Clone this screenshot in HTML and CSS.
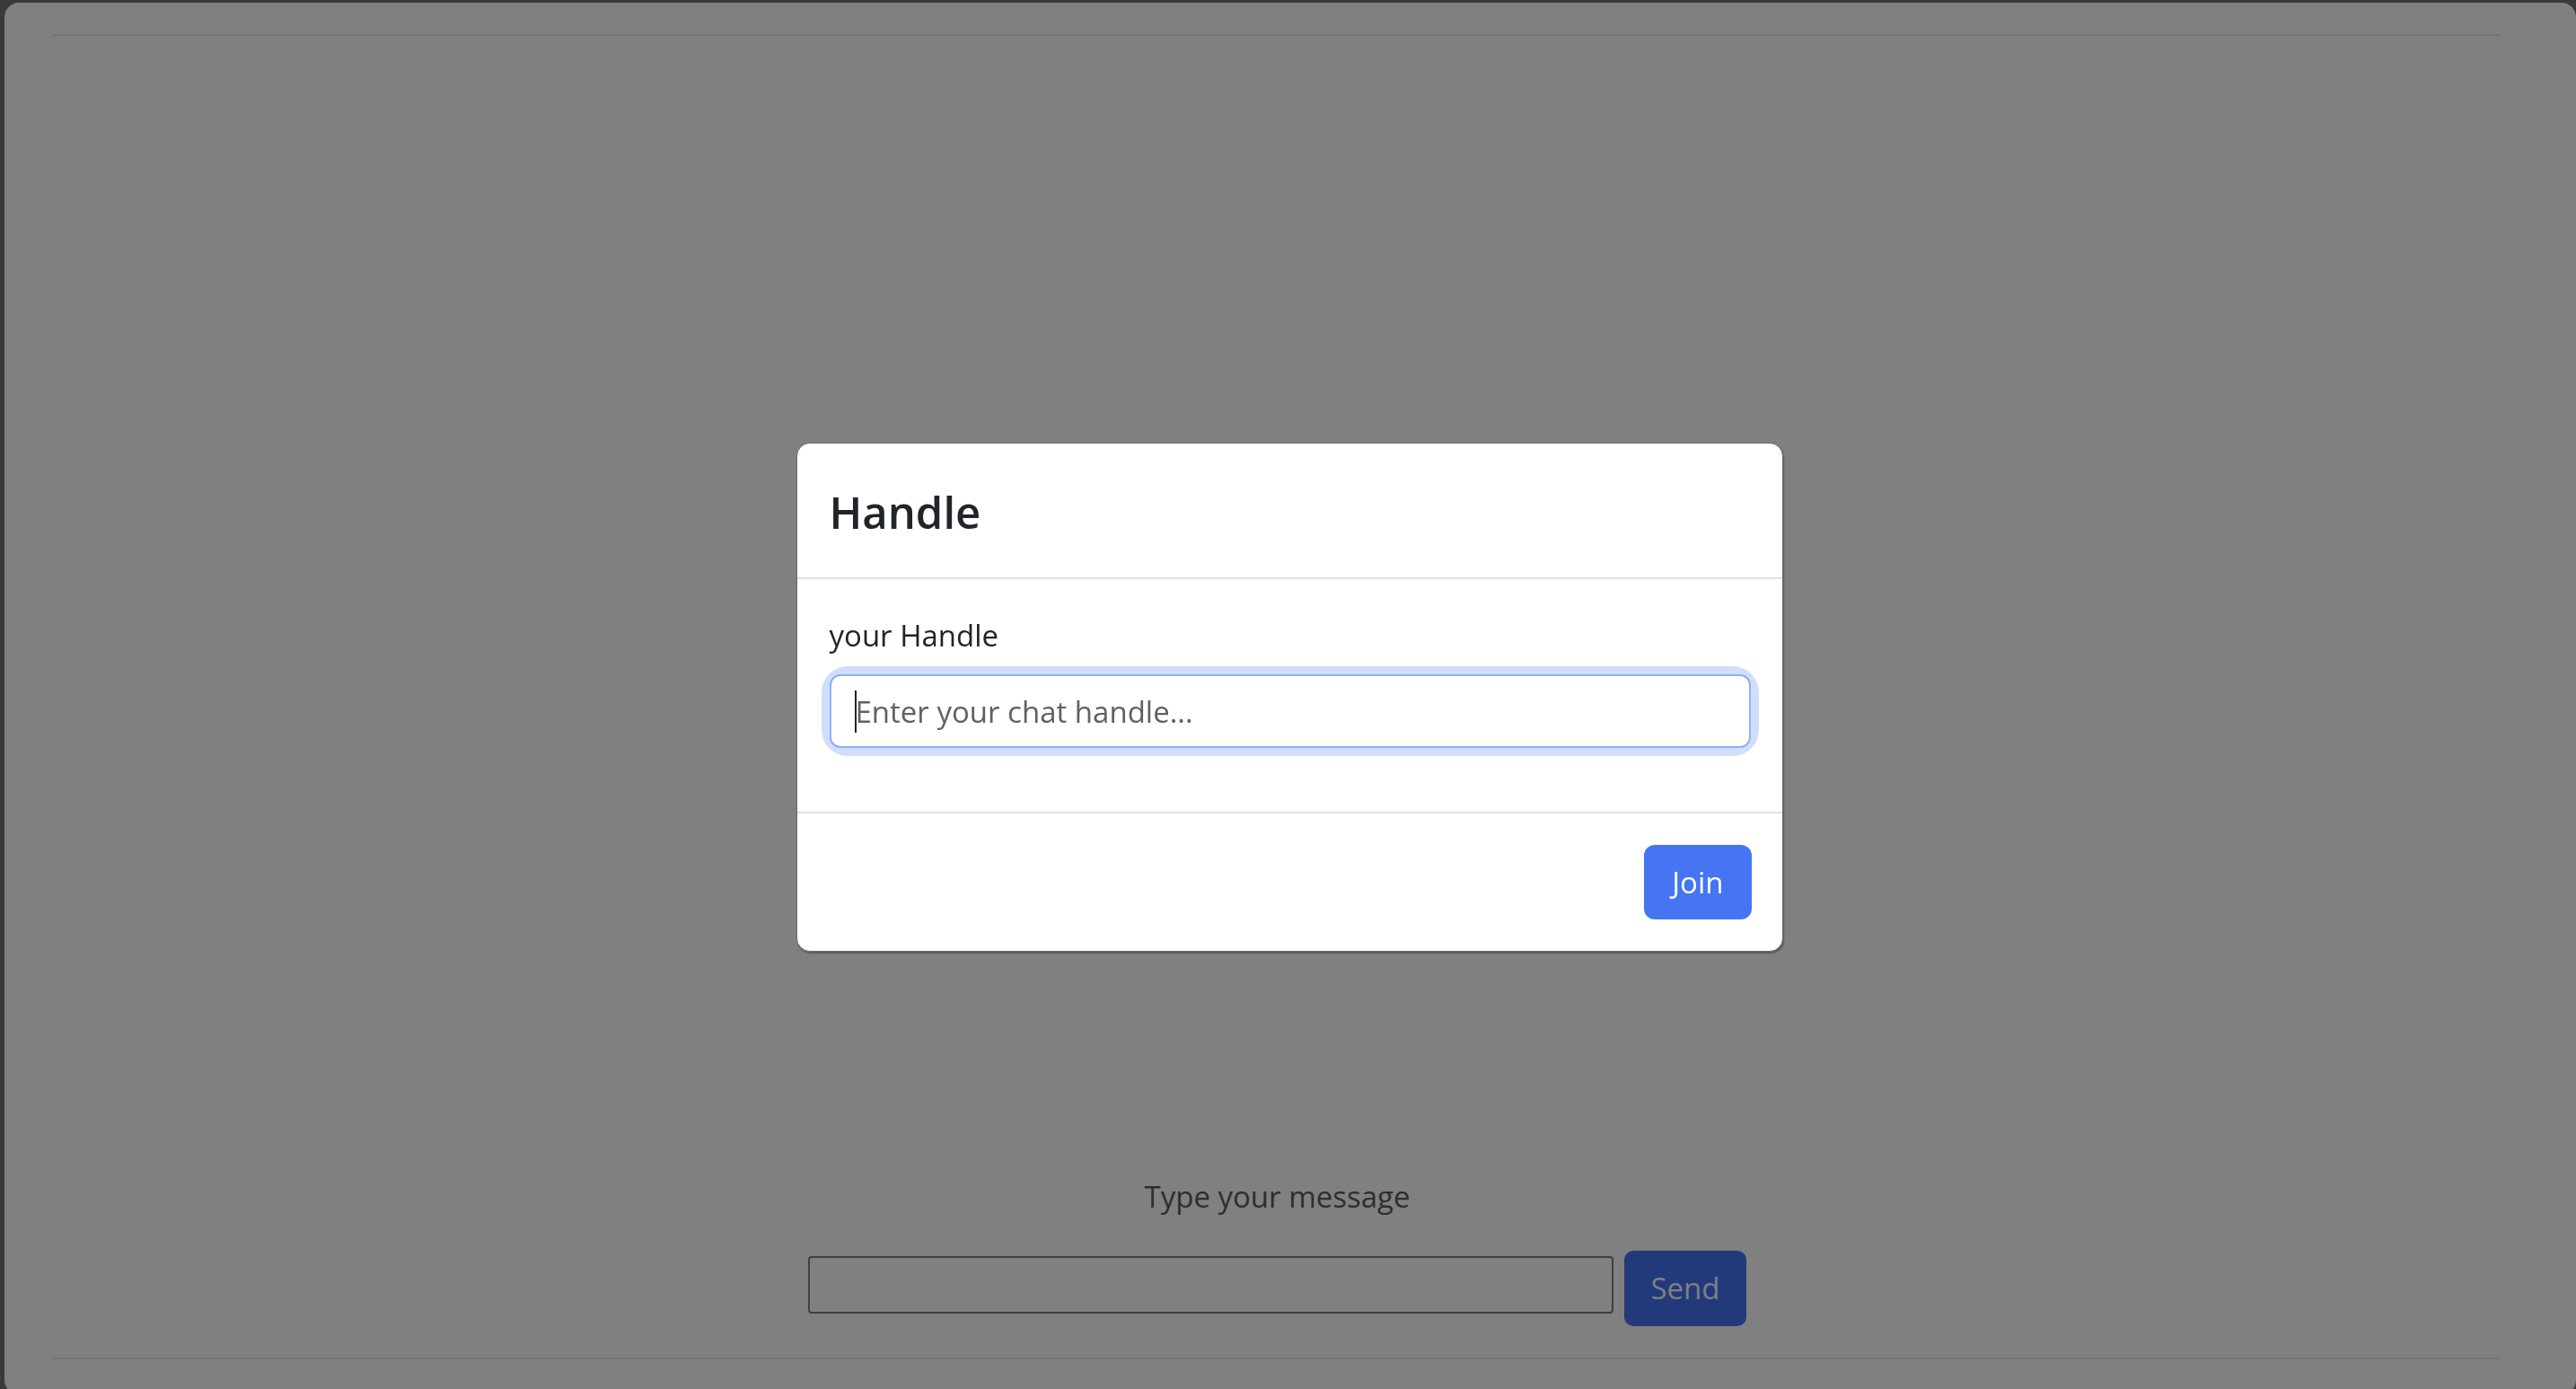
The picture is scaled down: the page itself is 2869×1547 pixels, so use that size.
FILE: index.html
```html
<!DOCTYPE html>
<html lang="en">
<head>
<meta charset="utf-8">
<title>Chat</title>
<link rel="stylesheet" href="styles.css">
</head>
<body>
  <div class="window">
    <hr class="rule">
    <div class="messages"></div>
    <div class="composer">
      <label class="composer-label">Type your message</label>
      <div class="composer-row">
        <div class="msg-input"></div>
        <button class="send-btn">Send</button>
      </div>
    </div>
    <hr class="rule">
  </div>

  <div class="overlay">
    <div class="modal">
      <div class="modal-header">
        <h5 class="modal-title">Handle</h5>
      </div>
      <div class="modal-body">
        <div class="field-label">your Handle</div>
        <div class="field-ring">
          <div class="field"><span class="caret"></span><span class="placeholder">Enter your chat handle...</span></div>
        </div>
      </div>
      <div class="modal-footer">
        <button class="join-btn">Join</button>
      </div>
    </div>
  </div>
</body>
</html>
```

FILE: styles.css
```css
* { box-sizing: border-box; }

html, body {
  margin: 0;
  height: 100%;
}

body {
  background: #3a3a3a;
  padding: 3px 0 0 5px;
  overflow: hidden;
  font-family: "Open Sans", "Noto Sans", sans-serif;
  font-size: 33px;
  line-height: 1.5;
  color: #212529;
}

.window {
  height: 1550px;
  background: #808080;
  border-radius: 16px;
  padding: 35px 84px 39px 53px;
  display: flex;
  flex-direction: column;
}

.rule {
  margin: 0;
  border: 0;
  border-top: 2px solid #767676;
  height: 0;
  flex: none;
}

.messages {
  flex: 1;
}

.composer {
  display: flex;
  flex-direction: column;
  align-items: center;
  padding: 0 0 35px 2px;
}

.composer-label {
  color: #2e2e2e;
  margin-bottom: 36px;
}

.composer-row {
  display: flex;
  align-items: flex-start;
  gap: 12px;
}

.msg-input {
  width: 897px;
  height: 64px;
  margin-top: 6px;
  border: 2px solid #404040;
  border-radius: 4px;
}

.send-btn {
  height: 84px;
  padding: 0 29px;
  border: 0;
  border-radius: 10px;
  background: #233a7a;
  color: #7f7f86;
  font: inherit;
  line-height: 1.5;
}

.overlay {
  position: fixed;
  inset: 0;
  display: flex;
  justify-content: center;
  align-items: flex-start;
  padding: 493px 0 0 3px;
}

.modal {
  width: 1099px;
  background: #fff;
  border: 1px solid #6a6a6a;
  border-radius: 15px;
  box-shadow: 1px 2px 2px rgba(0, 0, 0, 0.3);
}

.modal-header {
  padding: 47px 36px 43px;
  border-bottom: 2px solid #dee2e6;
}

.modal-title {
  margin: 0;
  font-size: 49px;
  font-weight: 600;
  line-height: 1.2;
  color: #212529;
}

.modal-body {
  padding: 38px 35px 71px 36px;
}

.field-label {
  margin-bottom: 19px;
}

.field-ring {
  border-radius: 20px;
  box-shadow: 0 0 0 9px #d1ddfb;
}

.field {
  display: flex;
  align-items: center;
  height: 82px;
  padding: 0 26px;
  border: 2px solid #8cb0f6;
  border-radius: 12px;
  background: #fff;
}

.caret {
  width: 2px;
  height: 47px;
  background: #222;
  margin-right: -1px;
}

.placeholder {
  color: #5e6166;
}

.modal-footer {
  display: flex;
  justify-content: flex-end;
  padding: 35px 34px 35px;
  border-top: 2px solid #dee2e6;
}

.join-btn {
  height: 83px;
  padding: 0 31px;
  border: 0;
  border-radius: 12px;
  background: #4675f4;
  color: #fff;
  font: inherit;
  line-height: 1.5;
}
```
